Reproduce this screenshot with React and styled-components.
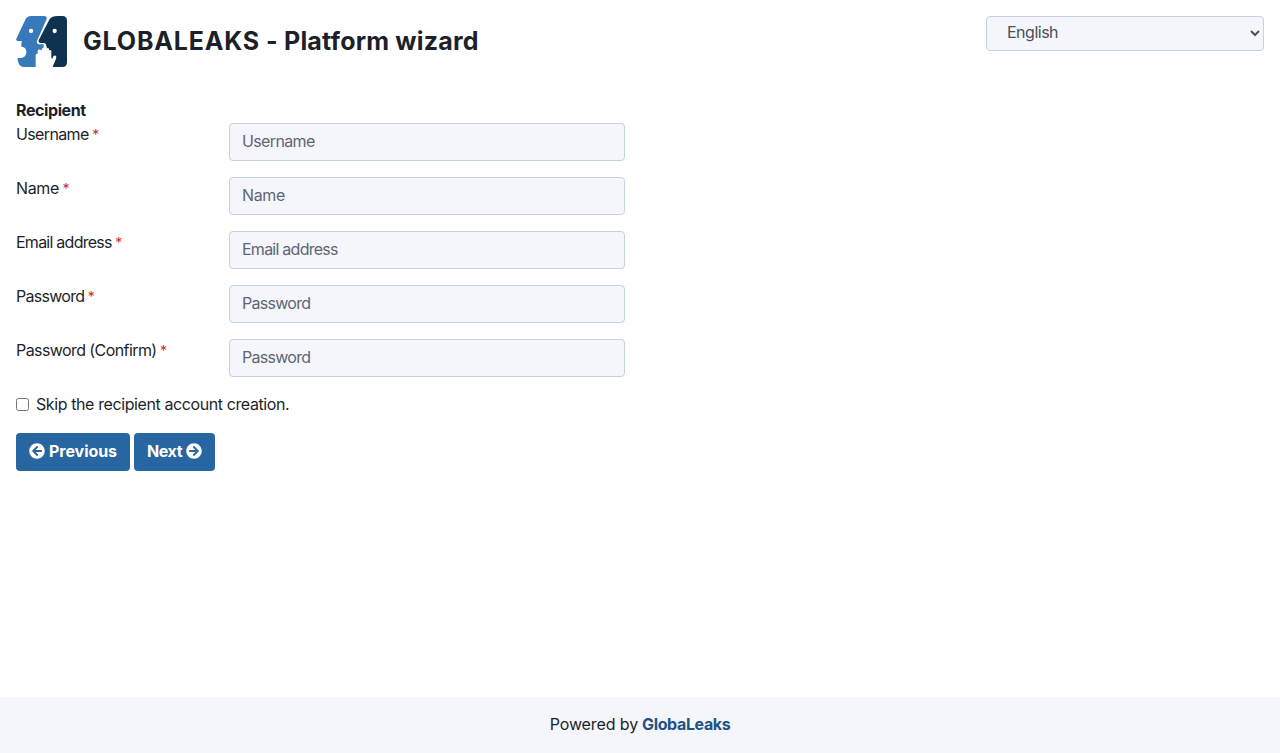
import React from "react";
import styled, { createGlobalStyle } from "styled-components";
import { FaArrowCircleLeft, FaArrowCircleRight } from "react-icons/fa";

const GlobalStyle = createGlobalStyle`
  *, *::before, *::after { box-sizing: border-box; }
  body {
    margin: 0;
    background: #fff;
    color: #1d1f2a;
    font-family: Inter, "Liberation Sans", sans-serif;
    font-size: 16px;
    font-weight: 400;
    line-height: 24px;
  }
`;

const Page = styled.div`
  min-height: 753px;
  display: flex;
  flex-direction: column;
`;

const Header = styled.header`
  display: flex;
  justify-content: space-between;
  align-items: flex-start;
  padding: 16px 16px 0;
`;

const Brand = styled.div`
  display: flex;
  align-items: center;
  gap: 16px;
`;

const LogoSvg = styled.svg`
  display: block;
  width: 51px;
  height: 51px;
`;

const Title = styled.h1`
  margin: 0;
  padding-bottom: 2px;
  font-size: 25px;
  line-height: 30px;
  font-weight: 650;
  white-space: nowrap;
`;

const Fit = styled.span`
  letter-spacing: ${(p) => p.$ls || 0}px;
  white-space: nowrap;
`;

const LanguageSelect = styled.select`
  width: 278px;
  height: 35px;
  padding: 0 0 3px 16px;
  border: 1px solid #c5d2e3;
  border-radius: 4px;
  background: #f5f6fb;
  color: #495057;
  font: inherit;
  letter-spacing: -0.5px;
`;

const Main = styled.main`
  flex: 1;
  padding: 31px 16px 0;
`;

const SectionTitle = styled.div`
  font-weight: 700;
`;

const Row = styled.div`
  display: grid;
  grid-template-columns: 213px 396px;
  margin-bottom: 16px;
`;

const Required = styled.span`
  margin-left: -1px;
  color: #d02c2c;
  font-size: 14px;
`;

const Input = styled.input`
  width: 100%;
  height: 38px;
  margin-top: 1px;
  margin-bottom: -1px;
  padding: 5px 12px 7px;
  border: 1px solid #c5d2e3;
  border-radius: 4px;
  background: #f5f6fb;
  font: inherit;
  letter-spacing: ${(p) => p.$ls}px;
  &::placeholder { color: #5f6672; opacity: 1; }
`;

const CheckRow = styled.label`
  display: flex;
  align-items: center;
  gap: 7px;
  margin-bottom: 17px;
`;

const Checkbox = styled.input`
  width: 13px;
  height: 13px;
  margin: 0;
`;

const Actions = styled.div`
  display: flex;
  gap: 4px;
`;

const Button = styled.button`
  display: flex;
  align-items: center;
  justify-content: space-between;
  width: ${(p) => p.$width}px;
  height: 38px;
  padding: 0 13px 2px;
  border: 0;
  border-radius: 4px;
  background: #2866a2;
  color: #fff;
  font: inherit;
  font-weight: 700;
  svg { flex: none; }
`;

const Footer = styled.footer`
  height: 56px;
  padding-bottom: 2px;
  background: #f5f6fb;
  display: flex;
  align-items: center;
  justify-content: center;
  gap: 4px;
`;

const FooterLink = styled.a`
  color: #1f5387;
  font-weight: 700;
`;

const fields = [
  { label: "Username", hint: "Username", ls: -0.64 },
  { label: "Name", hint: "Name", ls: -0.38 },
  { label: "Email address", hint: "Email address", ls: -0.75 },
  { label: "Password", hint: "Password", ls: -0.72 },
  { label: "Password (Confirm)", hint: "Password", ls: -0.58, hintLs: -0.72 },
];

function Logo() {
  return (
    <LogoSvg viewBox="0 0 153 153">
      <path fill="#377abc" d="M45 0H86Q94 2 92 9L63 75Q61 83 68 85H83V96L76 110L62 153H20Q7 148 5 132V125Q17 128 25 122Q34 114 30 102Q28 93 16 92V82L18 75H5Q-1 74 1 68L29 9Q34 0 45 0Z" />
      <path fill="#103251" d="M124 0H139Q153 0 153 14V139Q153 153 139 153H100L88 110L91 93Q91 81 83 81H72Q66 79 68 73L101 9Q108 0 124 0Z" />
      <path fill="#fff" d="M59 153V117Q59 113 65 113V105Q66 100 72 101L77 103V100Q79 94 85 96V91Q88 88 92 91V97Q96 94 99 98V103Q104 101 106 105V126L109 128L112 121Q118 116 121 122L119 131L113 145L110 153Z" />
      <circle cx="45" cy="45" r="6.5" fill="#fff" />
      <circle cx="116" cy="45" r="6.5" fill="#fff" />
    </LogoSvg>
  );
}

export default function App() {
  return (
    <Page>
      <GlobalStyle />
      <Header>
        <Brand>
          <Logo />
          <Title><Fit $ls={0.82}>GLOBALEAKS</Fit><Fit $ls={0.18}> - Platform wizard</Fit></Title>
        </Brand>
        <LanguageSelect defaultValue="en" aria-label="Language">
          <option value="en">English</option>
        </LanguageSelect>
      </Header>
      <Main>
        <SectionTitle><Fit $ls={-0.4}>Recipient</Fit></SectionTitle>
        {fields.map((f) => (
          <Row key={f.label}>
            <div>
              <Fit $ls={f.ls}>{f.label}</Fit> <Required>*</Required>
            </div>
            <Input placeholder={f.hint} $ls={f.hintLs || f.ls} />
          </Row>
        ))}
        <CheckRow>
          <Checkbox type="checkbox" />
          <Fit $ls={-0.4}>Skip the recipient account creation.</Fit>
        </CheckRow>
        <Actions>
          <Button $width={114}><FaArrowCircleLeft size={16} /><Fit $ls={-0.05}>Previous</Fit></Button>
          <Button $width={81}><Fit $ls={-0.4}>Next</Fit><FaArrowCircleRight size={16} /></Button>
        </Actions>
      </Main>
      <Footer>
        <Fit $ls={-0.1}>Powered by</Fit>
        <FooterLink><Fit $ls={-0.37}>GlobaLeaks</Fit></FooterLink>
      </Footer>
    </Page>
  );
}
